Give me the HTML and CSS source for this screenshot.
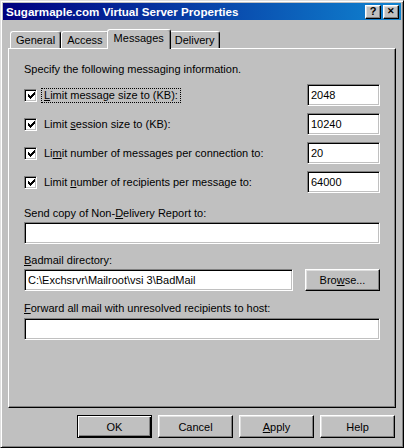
FILE: index.html
```html
<!DOCTYPE html>
<html lang="en">
<head>
    <meta charset="UTF-8">
    <title>Sugarmaple.com Virtual Server Properties</title>
    <link rel="stylesheet" href="styles.css">
</head>
<body>
    <div class="window">
        <div class="titlebar">
            <span class="title">Sugarmaple.com Virtual Server Properties</span>
            <div class="caption-buttons">
                <button class="caption-btn">?</button>
                <button class="caption-btn close">&#x2715;</button>
            </div>
        </div>

        <div class="tabs">
            <div class="tab">General</div>
            <div class="tab">Access</div>
            <div class="tab active">Messages</div>
            <div class="tab">Delivery</div>
        </div>

        <div class="panel">
            <p class="intro">Specify the following messaging information.</p>

            <div class="limit-row">
                <span class="check"><svg width="7" height="7" viewBox="0 0 7 7"><polygon points="0,2 2,4 6,0 7,0 7,3 2,7 0,5" fill="#000"/></svg></span>
                <span class="limit-label focused"><u>L</u>imit message size to (KB):</span>
                <input class="textbox small" type="text" value="2048">
            </div>
            <div class="limit-row">
                <span class="check"><svg width="7" height="7" viewBox="0 0 7 7"><polygon points="0,2 2,4 6,0 7,0 7,3 2,7 0,5" fill="#000"/></svg></span>
                <span class="limit-label">Limit <u>s</u>ession size to (KB):</span>
                <input class="textbox small" type="text" value="10240">
            </div>
            <div class="limit-row">
                <span class="check"><svg width="7" height="7" viewBox="0 0 7 7"><polygon points="0,2 2,4 6,0 7,0 7,3 2,7 0,5" fill="#000"/></svg></span>
                <span class="limit-label">Li<u>m</u>it number of messages per connection to:</span>
                <input class="textbox small" type="text" value="20">
            </div>
            <div class="limit-row">
                <span class="check"><svg width="7" height="7" viewBox="0 0 7 7"><polygon points="0,2 2,4 6,0 7,0 7,3 2,7 0,5" fill="#000"/></svg></span>
                <span class="limit-label">Limit <u>n</u>umber of recipients per message to:</span>
                <input class="textbox small" type="text" value="64000">
            </div>

            <div class="field first">
                <div class="field-label">Send copy of Non-<u>D</u>elivery Report to:</div>
                <input class="textbox" type="text" value="">
            </div>

            <div class="field">
                <div class="field-label"><u>B</u>admail directory:</div>
                <div class="field-row">
                    <input class="textbox grow" type="text" value="C:\Exchsrvr\Mailroot\vsi 3\BadMail">
                    <button class="btn">Bro<u>w</u>se...</button>
                </div>
            </div>

            <div class="field last">
                <div class="field-label"><u>F</u>orward all mail with unresolved recipients to host:</div>
                <input class="textbox" type="text" value="">
            </div>
        </div>

        <div class="actions">
            <button class="btn default">OK</button>
            <button class="btn">Cancel</button>
            <button class="btn"><u>A</u>pply</button>
            <button class="btn">Help</button>
        </div>
    </div>
</body>
</html>
```

FILE: styles.css
```css
* {
    margin: 0;
    padding: 0;
    box-sizing: border-box;
}

body {
    font-family: 'Liberation Sans', Arial, sans-serif;
    font-size: 11px;
    color: #000;
    background: #c0c0c0;
}

.window {
    width: 404px;
    height: 448px;
    display: flex;
    flex-direction: column;
    background: #c0c0c0;
    border: 1px solid;
    border-color: #dfdfdf #000 #000 #dfdfdf;
    box-shadow: inset 1px 1px #fff, inset -1px -1px #808080;
    padding: 2px;
}

.titlebar {
    height: 17px;
    display: flex;
    align-items: center;
    justify-content: space-between;
    padding: 0 2px 0 3px;
    background: linear-gradient(to right, #000080, #1084d0);
}

.title {
    color: #fff;
    font-weight: 700;
    font-size: 11.6px;
}

.caption-buttons {
    display: flex;
    gap: 2px;
}

.caption-btn {
    width: 16px;
    height: 14px;
    background: #c0c0c0;
    border: 1px solid;
    border-color: #fff #000 #000 #fff;
    box-shadow: inset -1px -1px #808080, inset 1px 1px #dfdfdf;
    font-family: 'Liberation Sans', Arial, sans-serif;
    font-size: 11px;
    font-weight: 700;
    line-height: 11px;
    color: #000;
}

.caption-btn.close {
    font-size: 9px;
}

/* tab strip */
.tabs {
    display: flex;
    align-items: flex-end;
    height: 19px;
    margin: 9px 0 0 7px;
}

.tab {
    height: 17px;
    padding: 1px 5px 0;
    line-height: 14px;
    background: #c0c0c0;
    border: 1px solid;
    border-bottom: none;
    border-color: #fff #000 #000 #fff;
    border-radius: 3px 3px 0 0;
    box-shadow: inset -1px 0 #808080;
}

.tab.active {
    position: relative;
    z-index: 1;
    height: 20px;
    margin: 0 -2px -1px;
    padding: 0 6px 3px;
    line-height: 16px;
}

.panel {
    height: 360px;
    margin: 0 5px;
    padding: 13px 15px 0;
    border: 1px solid;
    border-color: #fff #000 #000 #fff;
    box-shadow: inset -1px -1px #808080;
}

.intro {
    line-height: 14px;
    margin-bottom: 8px;
}

.limit-row {
    display: flex;
    align-items: center;
    height: 22px;
    margin-bottom: 7px;
}

.check {
    width: 13px;
    height: 13px;
    display: flex;
    align-items: center;
    justify-content: center;
    background: #fff;
    border: 1px solid;
    border-color: #808080 #fff #fff #808080;
    box-shadow: inset 1px 1px #000, inset -1px -1px #c0c0c0;
    margin-right: 4px;
}

.check svg {
    shape-rendering: crispEdges;
    margin: 1px 0 0 1px;
}

.limit-label {
    padding: 0 2px;
    line-height: 13px;
    border: 1px solid transparent;
}

.limit-label.focused {
    border: 1px dotted #000;
}

.textbox {
    display: block;
    width: 100%;
    height: 22px;
    padding: 0 3px;
    font-family: 'Liberation Sans', Arial, sans-serif;
    font-size: 11px;
    color: #000;
    background: #fff;
    border: 1px solid;
    border-color: #808080 #fff #fff #808080;
    box-shadow: inset 1px 1px #000, inset -1px -1px #c0c0c0;
    outline: none;
}

.textbox.small {
    width: 73px;
    margin-left: auto;
}

.field {
    margin-top: 9px;
}

.field.first {
    margin-top: 13px;
}

.field.last {
    margin-top: 10px;
}

.field-label {
    line-height: 14px;
    margin-bottom: 2px;
}

.field.last .field-label {
    margin-bottom: 3px;
}

.field-row {
    display: flex;
    gap: 12px;
}

.textbox.grow {
    flex: 1;
}

.btn {
    width: 75px;
    height: 23px;
    flex-shrink: 0;
    font-family: 'Liberation Sans', Arial, sans-serif;
    font-size: 11px;
    color: #000;
    background: #c0c0c0;
    border: 1px solid;
    border-color: #fff #000 #000 #fff;
    box-shadow: inset -1px -1px #808080, inset 1px 1px #dfdfdf;
}

.field-row .btn {
    height: 22px;
}

.btn.default {
    border-color: #000;
    box-shadow: inset 1px 1px #fff, inset -1px -1px #000, inset -2px -2px #808080;
}

.actions {
    display: flex;
    justify-content: flex-end;
    gap: 6px;
    margin-top: 7px;
    padding-right: 6px;
}
```
